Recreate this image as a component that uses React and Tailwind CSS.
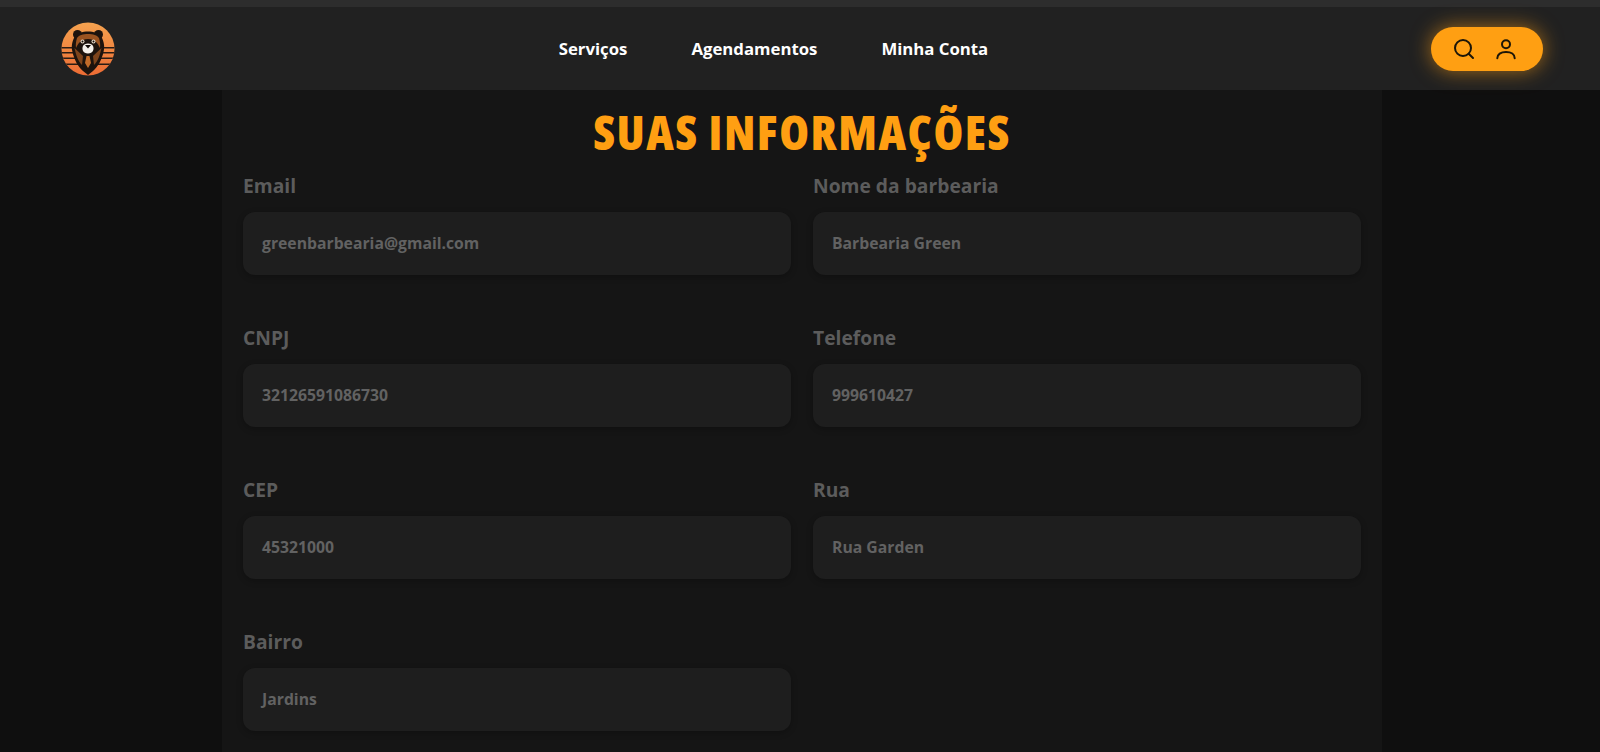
const font = { fontFamily: '"Open Sans","Noto Sans",sans-serif' };

function Logo() {
  return (
    <svg width="56" height="56" viewBox="0 0 56 56" className="shrink-0">
      <defs>
        <linearGradient id="sun" x1="0" y1="0" x2="0" y2="1">
          <stop offset="0" stopColor="#f5a450" />
          <stop offset="1" stopColor="#ec6a33" />
        </linearGradient>
        <clipPath id="disc"><circle cx="28" cy="28" r="26.500" /></clipPath>
      </defs>
      <g clipPath="url(#disc)">
        <rect width="56" height="56" fill="url(#sun)" />
        <path d="M0 26h56v1.500H0zM0 31h56v1.500H0zM0 36.500h56v1.500H0zM0 42.500h56v1.500H0z" fill="#2a1c14" />
      </g>
      <circle cx="17.500" cy="13.500" r="4.500" fill="#1d130d" />
      <circle cx="38.500" cy="13.500" r="4.500" fill="#1d130d" />
      <path d="M15 15C19 9 37 9 41 15C44 20 45 26 43.500 31C42 38 38 46 33 50L28 54L23 50C18 46 14 38 12.500 31C11 26 12 20 15 15Z" fill="#1d130d" />
      <path d="M17 17C20 11.500 36 11.500 39 17C40 20 40.500 24 40 27C38 23 36 18.500 28 18C20 18.500 18 23 16 27C15.500 24 16 20 17 17Z" fill="#9a5320" />
      <path d="M14.500 27C16 34 18 40 22 44L23 35ZM41.500 27C40 34 38 40 34 44L33 35Z" fill="#7d441c" />
      <circle cx="22.500" cy="20.500" r="2" fill="#e8dccb" />
      <circle cx="33.500" cy="20.500" r="2" fill="#e8dccb" />
      <circle cx="22.500" cy="20.500" r="1" fill="#120b07" />
      <circle cx="33.500" cy="20.500" r="1" fill="#120b07" />
      <path d="M23 25C24 21.500 32 21.500 33 25C34.500 28 33 32.500 28 32.500C23 32.500 21.500 28 23 25Z" fill="#f4f0ea" />
      <path d="M25 24H31L28 27.500Z" fill="#120b07" />
      <path d="M26.500 35H29.500L31 42L28 47L25 42Z" fill="#c26c2a" />
    </svg>
  );
}

function SearchIcon() {
  return (
    <svg width="24" height="24" viewBox="0 0 24 24" fill="none" stroke="#1c1608" strokeWidth="2" strokeLinecap="round" strokeLinejoin="round">
      <circle cx="11" cy="11" r="8" />
      <path d="m21 21-4.300-4.300" />
    </svg>
  );
}

function UserIcon() {
  return (
    <svg width="24" height="24" viewBox="0 0 24 24" fill="none" stroke="#1c1608" strokeWidth="2" strokeLinecap="round" strokeLinejoin="round">
      <circle cx="12" cy="7.300" r="4" />
      <path d="M3.300 21.300c0-4 3.500-6.300 8.700-6.300s8.700 2.300 8.700 6.300" />
    </svg>
  );
}

function Field({ label, value }) {
  return (
    <div className="flex flex-col">
      <label className="text-[19.250px] leading-[28px] font-bold text-[#5c5c5c] mb-[12px]">{label}</label>
      <div className="h-[63px] rounded-[12px] bg-[#1e1e1e] px-[19px] flex items-center text-[15.750px] font-bold text-[#626262] shadow-[0_2px_6px_rgba(0,0,0,0.25)]">
        {value}
      </div>
    </div>
  );
}

const fields = [
  ["Email", "greenbarbearia@gmail.com"],
  ["Nome da barbearia", "Barbearia Green"],
  ["CNPJ", "32126591086730"],
  ["Telefone", "999610427"],
  ["CEP", "45321000"],
  ["Rua", "Rua Garden"],
  ["Bairro", "Jardins"],
];

export default function App() {
  return (
    <div style={font} className="h-screen overflow-hidden bg-[#0f0f0f] flex flex-col">
      <div className="h-[7px] bg-[#2d2d2d] shrink-0" />
      <header className="h-[83px] shrink-0 bg-[#212121] flex items-center justify-between pl-[60px] pr-[57px] relative z-10">
        <Logo />
        <nav className="flex items-center gap-[64px] text-[16.750px] font-bold text-white">
          <span>Serviços</span>
          <span>Agendamentos</span>
          <span>Minha Conta</span>
        </nav>
        <div className="w-[112px] h-[44px] rounded-full bg-[#ff9f12] flex items-center pl-[21px] gap-[18px] shadow-[0_0_20px_rgba(255,159,18,0.6)]">
          <SearchIcon />
          <UserIcon />
        </div>
      </header>
      <main className="w-[1160px] ml-[222px] flex-1 bg-[#151515] px-[21px]">
        <h1 className="text-center text-[48px] tracking-[1.500px] leading-[60px] font-black font-stretch-condensed text-[#ff9f12] mt-[12px] mb-[10px]">SUAS INFORMAÇÕES</h1>
        <div className="grid grid-cols-2 gap-x-[22px] gap-y-[49px]">
          {fields.map(([l, v]) => (
            <Field key={l} label={l} value={v} />
          ))}
        </div>
      </main>
    </div>
  );
}
